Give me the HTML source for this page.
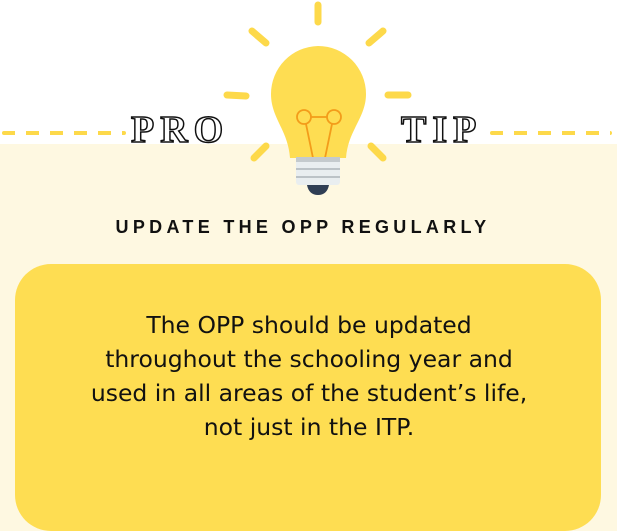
<!DOCTYPE html>
<html><head><style>
html,body{margin:0;width:617px;height:531px;overflow:hidden}
body{background:#fff;font-family:"Liberation Sans",sans-serif;position:relative}
.cream{position:absolute;left:0;top:144px;width:617px;height:387px;background:#fef8e1}
.box{position:absolute;left:15px;top:264px;width:586px;height:267px;background:#fedd52;border-radius:36px}
.dash{position:absolute;top:131px;height:4px;background-image:repeating-linear-gradient(90deg,#fdd94a 0 13px,transparent 13px 24px);border-radius:2px}
.pt{position:absolute;top:108px;font-family:"Liberation Serif",serif;font-size:38px;color:#fff;-webkit-text-stroke:1.5px #111;letter-spacing:6px;font-weight:bold}
.h{position:absolute;top:217px;left:0;width:606px;text-align:center;font-size:18px;font-weight:bold;letter-spacing:4.3px;color:#111}
.t{position:absolute;top:308px;left:15px;width:588px;text-align:center;font-family:"DejaVu Sans",sans-serif;font-size:23.5px;line-height:34px;color:#111}
</style></head><body>
<div class="cream"></div>
<div class="box"></div>
<div class="dash" style="left:2px;width:124px"></div>
<div class="dash" style="left:490px;width:122px"></div>
<div class="pt" style="left:131px">PRO</div>
<div class="pt" style="left:401px">TIP</div>
<svg style="position:absolute;left:0;top:0" width="617" height="200">
<g stroke="#fdd94a" stroke-width="7" stroke-linecap="round" fill="none">
<line x1="318" y1="5" x2="318" y2="22"/>
<line x1="252" y1="31" x2="266" y2="43"/>
<line x1="383" y1="31" x2="369" y2="43"/>
<line x1="227" y1="95" x2="246" y2="96"/>
<line x1="388" y1="95" x2="408" y2="95"/>
<line x1="254" y1="158" x2="266" y2="146"/>
<line x1="383" y1="158" x2="371" y2="146"/>
</g>
<path d="M318 46 A48 48 0 0 1 366 94 C366 118 348 130 346 158 L290 158 C288 130 271 118 271 94 A48 48 0 0 1 318 46 Z" fill="#fedd52"/>
<g stroke="#f39c1a" stroke-width="1.8" fill="none">
<circle cx="304" cy="117" r="7"/><circle cx="334" cy="117" r="7"/>
<path d="M311 117 L327 117 M306 124 L313 158 M332 124 L325 158"/>
</g>
<rect x="296" y="157" width="44" height="28" rx="3" fill="#e9eef0"/>
<rect x="296" y="157" width="44" height="5" fill="#c4cacd"/>
<rect x="296" y="168" width="44" height="2" fill="#bcc3c7"/>
<rect x="296" y="176" width="44" height="2" fill="#bcc3c7"/>
<path d="M307 185 L329 185 Q327 195 318 195 Q309 195 307 185Z" fill="#2f3e54"/>
</svg>
<div class="h">UPDATE THE OPP REGULARLY</div>
<div class="t">The OPP should be updated<br>throughout the schooling year and<br>used in all areas of the student’s life,<br>not just in the ITP.</div>
</body></html>
